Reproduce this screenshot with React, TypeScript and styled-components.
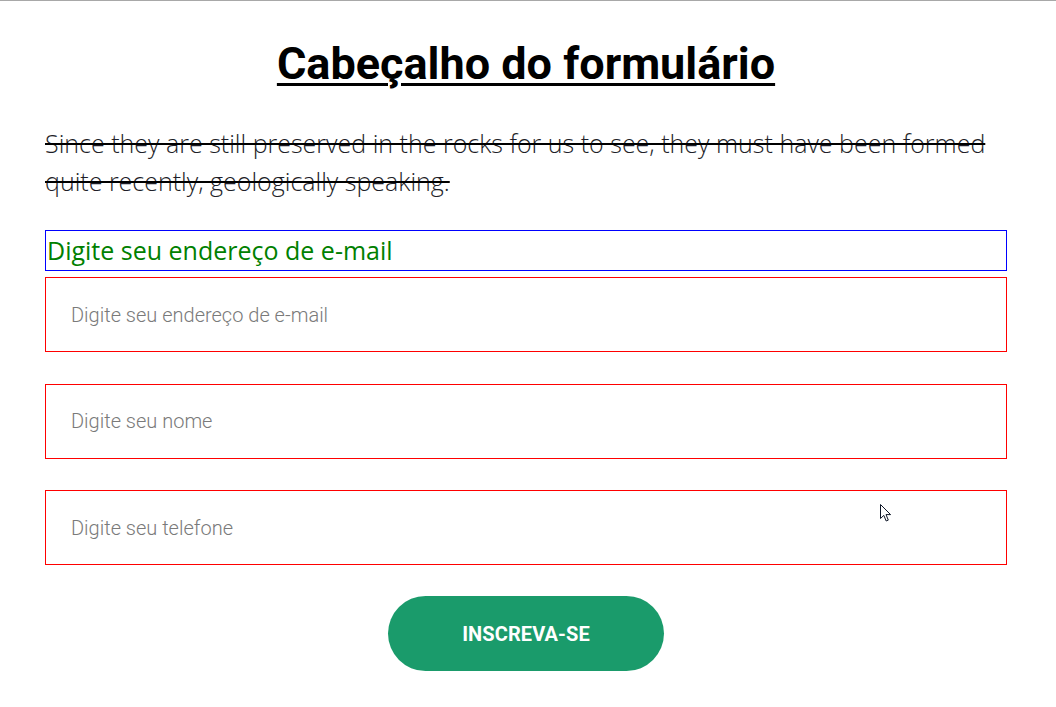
import * as React from 'react';
import styled, { createGlobalStyle } from 'styled-components';

const GlobalStyle = createGlobalStyle`
  html, body {
    margin: 0;
    padding: 0;
    background: #ffffff;
  }
`;

const Page = styled.div`
  position: relative;
  min-height: 707px;
  border-top: 1px solid #a8a8a8;
  box-sizing: border-box;
  padding: 0 49px 0 45px;
`;

const Title = styled.h1`
  margin: 35px 0 0;
  text-align: center;
  font-family: Roboto, "Liberation Sans", sans-serif;
  font-weight: 700;
  font-size: 45px;
  line-height: 56px;
  color: #000000;
  text-decoration: underline;
  text-decoration-thickness: 3px;
  text-underline-offset: 4px;
`;

const Lead = styled.p`
  margin: 32px 0 0;
  font-family: "Open Sans", "Liberation Sans", sans-serif;
  font-weight: 300;
  font-size: 25px;
  line-height: 38px;
  color: #1e1e28;
  text-decoration: line-through;
  text-decoration-color: #000000;
  text-decoration-thickness: 2px;
`;

const Form = styled.form`
  display: flex;
  flex-direction: column;
  margin-top: 30px;
`;

const Label = styled.label`
  display: block;
  border: 1px solid #0000ff;
  padding: 0 1px;
  font-family: "Open Sans", "Liberation Sans", sans-serif;
  font-size: 25px;
  line-height: 39px;
  color: #008000;
`;

const Fields = styled.div`
  display: flex;
  flex-direction: column;
  gap: 31.5px;
  margin-top: 6px;
`;

const Field = styled.input`
  box-sizing: border-box;
  width: 100%;
  height: 75px;
  border: 1px solid #ff0000;
  padding: 0 25px;
  font-family: Roboto, "Liberation Sans", sans-serif;
  font-weight: 300;
  font-size: 20px;
  color: #333333;
  background: #ffffff;
  outline: none;

  &::placeholder {
    color: #7a7a7a;
  }
`;

const Actions = styled.div`
  display: flex;
  justify-content: center;
  margin-top: 31px;
`;

const Submit = styled.button`
  width: 276px;
  height: 75px;
  border: none;
  border-radius: 38px;
  background: #1a9b6b;
  color: #ffffff;
  font-family: Roboto, "Liberation Sans", sans-serif;
  font-weight: 700;
  font-size: 20px;
  letter-spacing: 0.1px;
  cursor: pointer;
`;

const Pointer = styled.svg`
  position: absolute;
  left: 880px;
  top: 503px;
  pointer-events: none;
`;

const placeholders = [
  'Digite seu endereço de e-mail',
  'Digite seu nome',
  'Digite seu telefone'
];

const App: React.FC = () => (
  <>
    <GlobalStyle />
    <Page>
      <Title>Cabeçalho do formulário</Title>
      <Lead>
        Since they are still preserved in the rocks for us to see, they must have been formed
        quite recently, geologically speaking.
      </Lead>
      <Form onSubmit={(e) => e.preventDefault()}>
        <Label htmlFor="email">Digite seu endereço de e-mail</Label>
        <Fields>
          {placeholders.map((text, i) => (
            <Field key={text} id={i === 0 ? 'email' : undefined} placeholder={text} />
          ))}
        </Fields>
        <Actions>
          <Submit type="submit">INSCREVA-SE</Submit>
        </Actions>
      </Form>
      <Pointer width="13" height="20" viewBox="0 0 13 20">
        <path
          d="M0.5 0.5 L0.5 14.5 L3.8 11.4 L6.2 17 L8.3 16.1 L6 10.6 L10.6 10.6 Z"
          fill="#ffffff"
          stroke="#101828"
          strokeWidth="1"
          strokeLinejoin="round"
        />
      </Pointer>
    </Page>
  </>
);

export default App;
